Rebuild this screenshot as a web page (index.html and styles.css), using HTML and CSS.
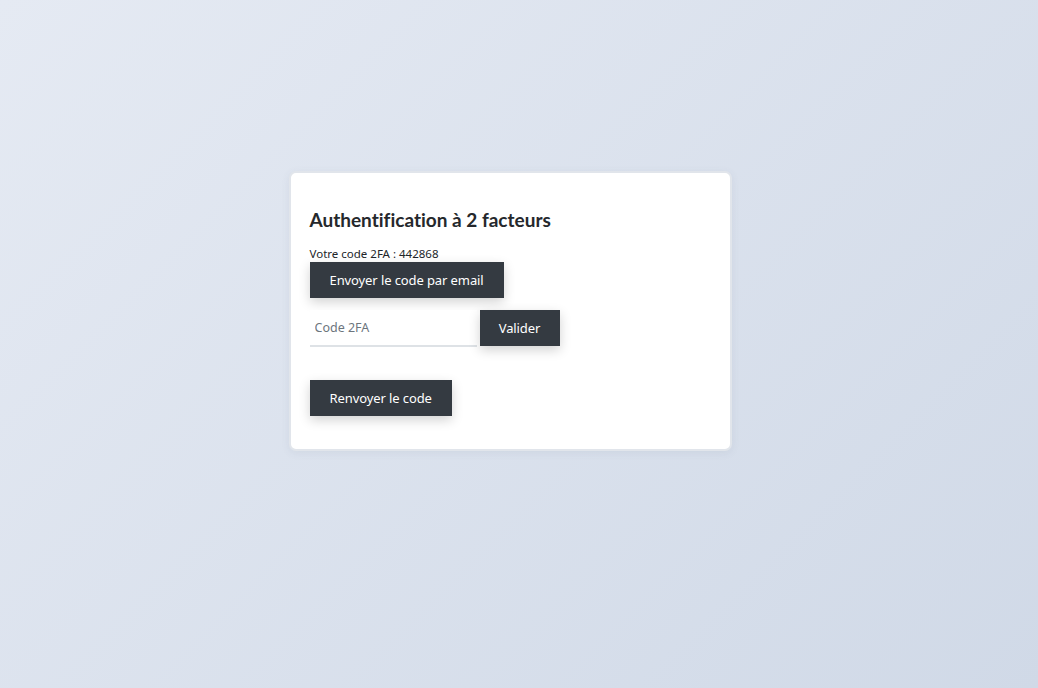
FILE: index.html
```html
<!DOCTYPE html>
<html lang="fr">
<head>
<meta charset="utf-8">
<title>Authentification à 2 facteurs</title>
<link rel="stylesheet" href="styles.css">
</head>
<body>
<main class="page">
  <section class="card">
    <h1 class="title">Authentification à 2 facteurs</h1>
    <p class="code-line">Votre code 2FA : 442868</p>
    <button class="btn btn-email">Envoyer le code par email</button>
    <form class="verify">
      <input class="code-input" type="text" placeholder="Code 2FA">
      <button class="btn btn-validate" type="button">Valider</button>
    </form>
    <button class="btn btn-resend">Renvoyer le code</button>
  </section>
</main>
</body>
</html>
```
FILE: styles.css
```css
html, body {
  margin: 0;
  padding: 0;
  height: 100%;
}
body {
  font-family: "Noto Sans", "Open Sans", "Liberation Sans", sans-serif;
  background: linear-gradient(135deg, #e5eaf3 0%, #d0d9e7 100%);
  color: #212529;
}
.page {
  height: 100%;
  display: flex;
  justify-content: center;
  align-items: flex-start;
  padding: 171px 18px 0 0;
  box-sizing: border-box;
}
.card {
  width: 443px;
  box-sizing: border-box;
  background: #fff;
  border: 2px solid #e1e5eb;
  border-radius: 7px;
  padding: 26px 19px 33px 19px;
  display: flex;
  flex-direction: column;
  align-items: flex-start;
  box-shadow: 0 2px 8px rgba(80, 95, 120, 0.08);
}
.title {
  margin: 9px 0 0 0;
  font-family: "Lato", "Noto Sans", sans-serif;
  font-size: 19px;
  font-weight: 700;
  line-height: 24px;
  color: #25282c;
  font-variant-ligatures: none;
}
.code-line {
  margin: 15px 0 0 0;
  font-size: 11.5px;
  line-height: 14px;
  color: #212529;
}
.btn {
  border: none;
  background: #343a41;
  color: #fff;
  font-family: inherit;
  font-size: 13px;
  height: 36px;
  padding: 0 20px;
  cursor: pointer;
  box-shadow: 0 4px 12px rgba(0, 0, 0, 0.18);
  letter-spacing: -0.1px;
}
.btn-email {
  margin-top: 1px;
}
.verify {
  margin: 12px 0 0 0;
  display: flex;
  align-items: flex-start;
  gap: 3px;
}
.code-input {
  width: 167px;
  height: 37px;
  box-sizing: border-box;
  border: none;
  border-bottom: 2px solid #dee2e6;
  padding: 0 5px;
  font-family: inherit;
  font-size: 12.5px;
  color: #495057;
  outline: none;
  background: #fff;
}
.code-input::placeholder {
  color: #6c757d;
}
.btn-validate {
  width: 80px;
  padding: 0;
}
.btn-resend {
  margin-top: 33px;
}
```
